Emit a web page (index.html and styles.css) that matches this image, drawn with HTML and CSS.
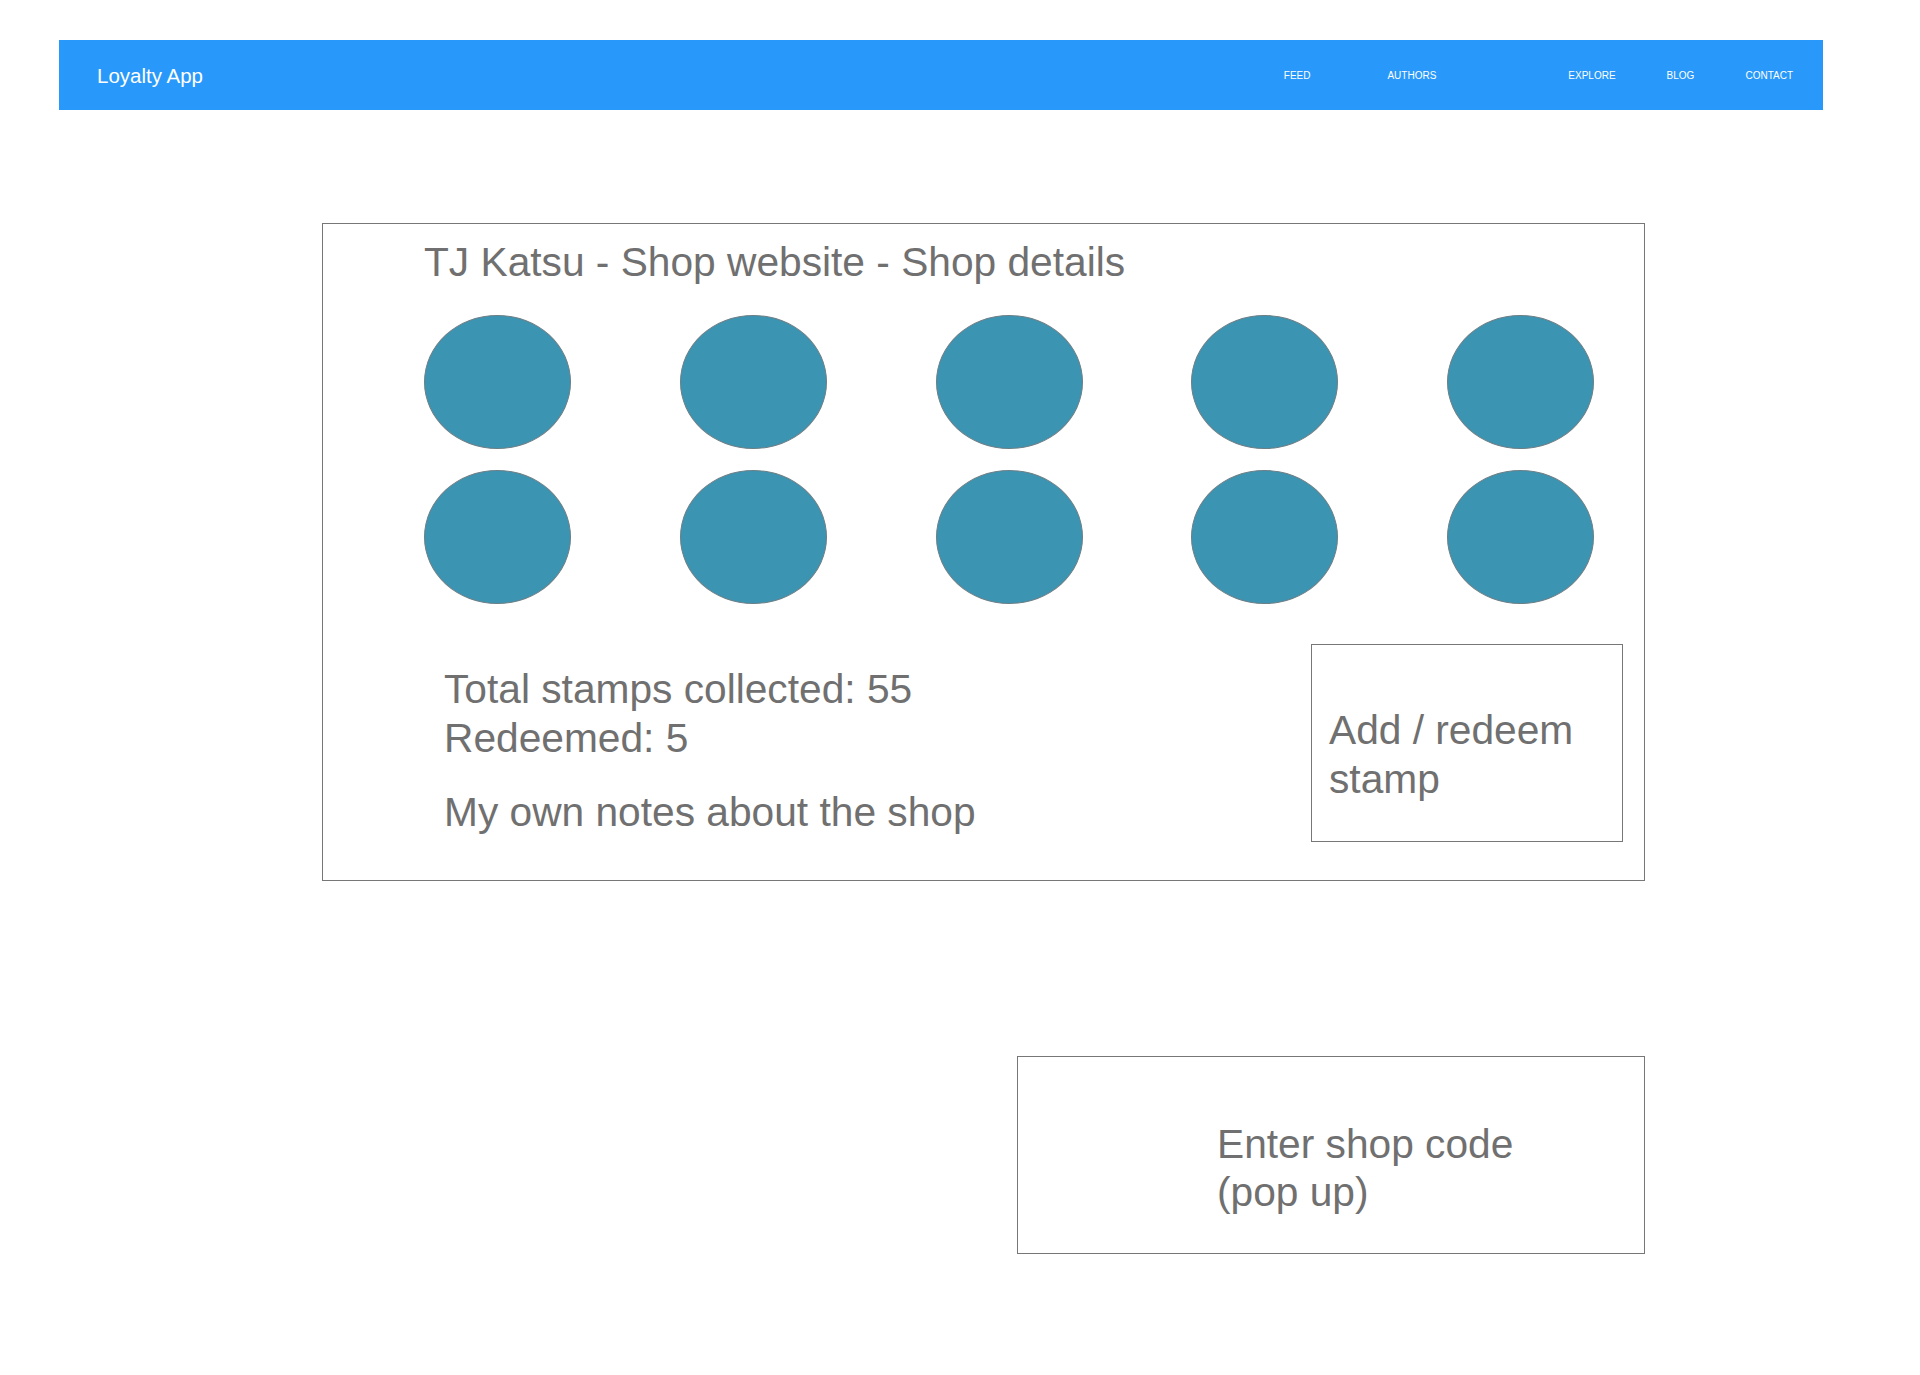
FILE: index.html
```html
<!DOCTYPE html>
<html lang="en">
<head>
<meta charset="utf-8">
<title>Loyalty App</title>
<link rel="stylesheet" href="styles.css">
</head>
<body>
  <header class="navbar">
    <div class="brand">Loyalty App</div>
    <nav class="nav-links">
      <a class="nav-link">FEED</a>
      <a class="nav-link nav-link--authors">AUTHORS</a>
      <a class="nav-link nav-link--explore">EXPLORE</a>
      <a class="nav-link">BLOG</a>
      <a class="nav-link">CONTACT</a>
    </nav>
  </header>

  <main class="page">
    <section class="card">
      <h1 class="card-title">TJ Katsu - Shop website - Shop details</h1>
      <div class="stamps">
        <span class="stamp"></span><span class="stamp"></span><span class="stamp"></span><span class="stamp"></span><span class="stamp"></span>
        <span class="stamp"></span><span class="stamp"></span><span class="stamp"></span><span class="stamp"></span><span class="stamp"></span>
      </div>
      <div class="card-bottom">
        <div class="stats">
          <p class="stat-line">Total stamps collected: 55</p>
          <p class="stat-line">Redeemed: 5</p>
          <p class="notes">My own notes about the shop</p>
        </div>
        <div class="action-box">Add / redeem<br>stamp</div>
      </div>
    </section>

    <section class="popup">
      <div class="popup-text">Enter shop code<br>(pop up)</div>
    </section>
  </main>
</body>
</html>
```

FILE: styles.css
```css
* { box-sizing: border-box; }

html, body {
  margin: 0;
  padding: 0;
  background: #ffffff;
}

body {
  font-family: "Liberation Sans", Arial, Helvetica, sans-serif;
  color: #707070;
  padding-top: 40px;
}

.navbar {
  margin-left: 59px;
  width: 1764px;
  height: 70px;
  background: #2899fa;
  display: flex;
  align-items: center;
  padding-left: 38px;
  padding-right: 30px;
}

.brand {
  color: #ffffff;
  font-size: 20.5px;
  margin-top: 2px;
}

.nav-links {
  margin-left: auto;
  display: flex;
  gap: 51px;
}

.nav-link {
  color: #ffffff;
  font-size: 10px;
  text-decoration: none;
}

.nav-link--authors { margin-left: 26px; }
.nav-link--explore { margin-left: 81px; }

.page {
  display: flex;
  flex-direction: column;
}

.card {
  margin-top: 113px;
  margin-left: 322px;
  width: 1323px;
  border: 1px solid #777777;
  padding: 14px 21px 38px 101px;
}

.card-title {
  margin: 0;
  font-weight: normal;
  font-size: 40.7px;
  line-height: 48px;
  color: #707070;
}

.stamps {
  margin-top: 29px;
  display: grid;
  grid-template-columns: repeat(5, 147px);
  grid-auto-rows: 134px;
  column-gap: 108.75px;
  row-gap: 21px;
}

.stamp {
  display: block;
  border-radius: 50%;
  background: #3b94b2;
  border: 1px solid #6d7f86;
}

.card-bottom {
  margin-top: 40px;
  display: flex;
  align-items: flex-start;
  justify-content: space-between;
}

.stats {
  margin-top: 21px;
  margin-left: 20px;
}

.stat-line {
  margin: 0;
  font-size: 40.7px;
  line-height: 49px;
}

.notes {
  margin: 25px 0 0 0;
  font-size: 40.7px;
  line-height: 49px;
}

.action-box {
  width: 312px;
  height: 198px;
  border: 1px solid #777777;
  padding: 61px 0 0 17px;
  font-size: 40.7px;
  line-height: 49px;
}

.popup {
  margin-top: 175px;
  margin-left: 1017px;
  width: 628px;
  height: 198px;
  border: 1px solid #777777;
  padding: 63px 0 0 199px;
}

.popup-text {
  font-size: 40.7px;
  line-height: 48px;
}
```
